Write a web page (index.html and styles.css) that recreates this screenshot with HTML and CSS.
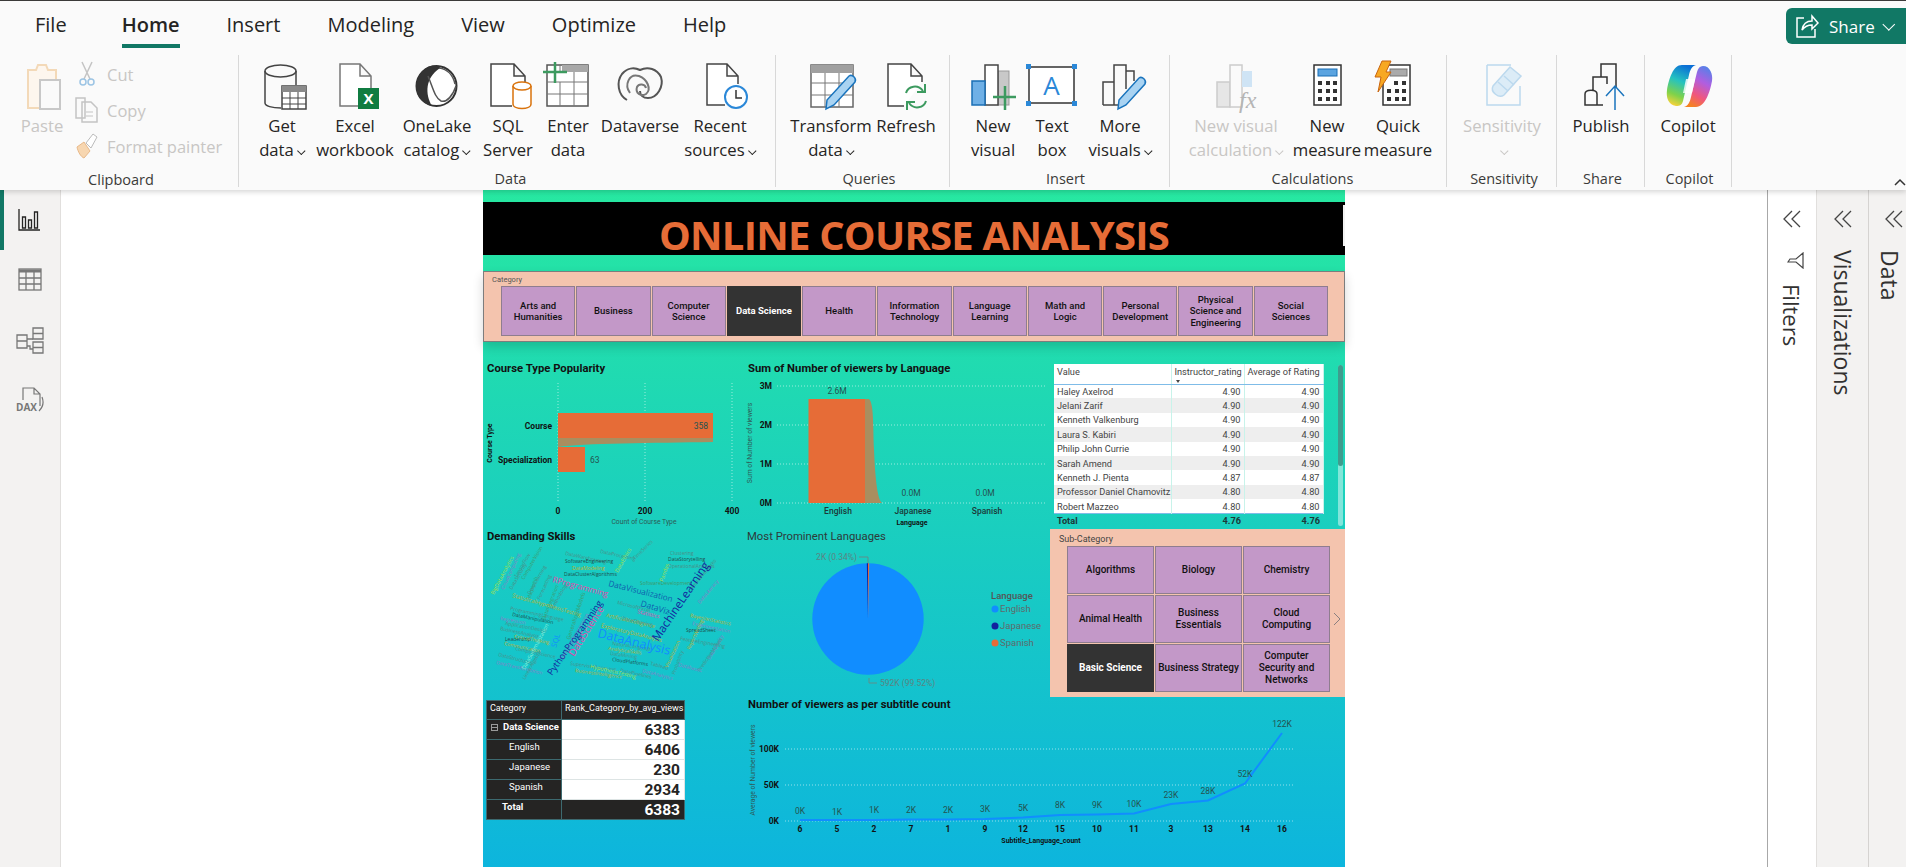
FILE: index.html
```html
<!DOCTYPE html>
<html lang="en">
<head>
    <meta charset="UTF-8">
    <title>Online Course Analysis - Power BI Desktop</title>
    <link rel="stylesheet" href="styles.css">
</head>
<body>

    <!-- ribbon -->
    <header class="ribbon">
        <nav class="tabs">
            <span class="tab tab-file">File</span>
            <span class="tab tab-active">Home</span>
            <span class="tab">Insert</span>
            <span class="tab">Modeling</span>
            <span class="tab">View</span>
            <span class="tab">Optimize</span>
            <span class="tab">Help</span>
            <button class="share">
                <svg width="24" height="26" viewBox="0 0 24 26"><path d="M9 5H2v19h18v-8M7 17c1-6 5-9 10-9V3l6 7-6 6v-4c-4 0-7 1-10 5z" fill="none" stroke="#fff" stroke-width="1.5"/></svg>
                Share
                <i class="caret caret-share"></i>
            </button>
        </nav>

        <div class="groups">
            <section class="group group-clipboard">
                <div class="group-body">
                    <div class="btn w76 disabled">
                        <svg class="icon" width="56" height="50" viewBox="0 0 56 50"><path d="M14 8h8l2-5h8l2 5h8v38H14z" fill="#fdf6ee" stroke="#f3d9b8" stroke-width="2"/><rect x="26" y="18" width="20" height="29" fill="#fafafa" stroke="#c8c8c8" stroke-width="2"/></svg>
                        <span class="label">Paste</span>
                    </div>
                    <div class="small-stack disabled">
                        <div class="small-btn">
                            <svg width="22" height="26" viewBox="0 0 22 26"><path d="M6 1l8 17M16 1L8 18" stroke="#c4c4c4" stroke-width="1.5"/><circle cx="7" cy="21" r="3" fill="none" stroke="#9cc4e4" stroke-width="1.5"/><circle cx="15" cy="21" r="3" fill="none" stroke="#9cc4e4" stroke-width="1.5"/></svg>
                            <span>Cut</span>
                        </div>
                        <div class="small-btn">
                            <svg width="24" height="26" viewBox="0 0 24 26"><path d="M1 1h9v20H1zM7 5h9l6 6v14H7z" fill="#fafafa" stroke="#c4c4c4" stroke-width="1.5"/><path d="M11 15h7M11 19h7" stroke="#c4c4c4"/></svg>
                            <span>Copy</span>
                        </div>
                        <div class="small-btn">
                            <svg width="24" height="26" viewBox="0 0 24 26"><path d="M2 14l7-5 6 9-6 7c-3-1-6-6-7-11z" fill="#f7d6b0" stroke="#e8b98a"/><path d="M11 10l7-9 4 3-6 11z" fill="#fff" stroke="#bbb"/></svg>
                            <span>Format painter</span>
                        </div>
                    </div>
                </div>
                <div class="group-name">Clipboard</div>
            </section>

            <section class="group group-data">
                <div class="group-body">
                    <div class="btn w72">
                        <svg class="icon" width="56" height="50" viewBox="0 0 56 50"><path d="M11 9v32c0 3 7 5 16 5M42 9v14" fill="none" stroke="#444" stroke-width="1.5"/><ellipse cx="26.500" cy="9" rx="15.500" ry="6" fill="none" stroke="#444" stroke-width="1.5"/><rect x="28" y="24" width="24" height="23" fill="#fff" stroke="#444" stroke-width="1.5"/><rect x="28" y="24" width="24" height="6" fill="#8a8a8a"/><path d="M28 36h24M28 42h24M36 30v17M44 30v17" stroke="#444"/></svg>
                        <span class="label">Get<br>data<i class="caret"></i></span>
                    </div>
                    <div class="btn w74">
                        <svg class="icon" width="56" height="50" viewBox="0 0 56 50"><path d="M31 44H13V2h20l11 12v12M33 2v12h11" fill="#fff" stroke="#777" stroke-width="1.500"/><rect x="31" y="26" width="21" height="21" fill="#107c41"/><text class="excel-x" x="41.500" y="42">X</text></svg>
                        <span class="label">Excel<br>workbook</span>
                    </div>
                    <div class="btn w90">
                        <svg class="icon" width="56" height="50" viewBox="0 0 56 50"><circle cx="27.500" cy="24" r="20" fill="#fff" stroke="#333" stroke-width="2"/><path d="M22 4C9 8 5 22 9 33c3 6 9 10 14 11-7-12-7-28 8-38 3-2-5-3-9-2z" fill="#333"/><path d="M19 14c5 12 7 22 13 25 6 2 12-6 15-15M30 6c8 1 14 7 16 16" fill="none" stroke="#555" stroke-width="1.500"/></svg>
                        <span class="label">OneLake<br>catalog<i class="caret"></i></span>
                    </div>
                    <div class="btn w52">
                        <svg class="icon" width="56" height="50" viewBox="0 0 56 50"><path d="M32 44H11V2h23l11 12v6M34 2v12h11" fill="#fff" stroke="#444" stroke-width="1.500"/><path d="M33 24v18c0 6 18 6 18 0V24" fill="#fff" stroke="#d9730d" stroke-width="1.500"/><ellipse cx="42" cy="24" rx="9" ry="4" fill="#fff" stroke="#d9730d" stroke-width="1.500"/></svg>
                        <span class="label">SQL<br>Server</span>
                    </div>
                    <div class="btn w68">
                        <svg class="icon" width="56" height="50" viewBox="0 0 56 50"><rect x="7" y="3" width="41" height="41" fill="#fff" stroke="#555" stroke-width="1.500"/><rect x="22" y="3" width="26" height="7" fill="#a8a8a8"/><path d="M7 20h41M7 32h41M20 20v24M34 10v34M20 3v7" stroke="#777"/><path d="M15 0v21M3 10h24" stroke="#3c9a5f" stroke-width="2.500"/></svg>
                        <span class="label">Enter<br>data</span>
                    </div>
                    <div class="btn w76">
                        <svg class="icon" width="56" height="50" viewBox="0 0 56 50"><path d="M15 38C6 33 4 20 10 12c5-6 12-7 18-4 8-4 17-1 21 7 3 10-4 21-13 21-5 0-8-3-8-7" fill="none" stroke="#555" stroke-width="2"/><path d="M18 31c-6-8-1-20 9-17 8 3 13 13 7 18-5 3-11-1-9-7 2-4 8-3 9 1" fill="none" stroke="#777" stroke-width="2"/></svg>
                        <span class="label">Dataverse</span>
                    </div>
                    <div class="btn w84">
                        <svg class="icon" width="56" height="50" viewBox="0 0 56 50"><path d="M33 43H15V2h20l11 12v8M35 2v12h11" fill="#fff" stroke="#444" stroke-width="1.500"/><circle cx="44" cy="35" r="11" fill="#fff" stroke="#2b88d8" stroke-width="2"/><path d="M44 28v8h6" fill="none" stroke="#333" stroke-width="1.500"/></svg>
                        <span class="label">Recent<br>sources<i class="caret"></i></span>
                    </div>
                </div>
                <div class="group-name">Data</div>
            </section>

            <section class="group group-queries">
                <div class="group-body">
                    <div class="btn w84">
                        <svg class="icon" width="56" height="50" viewBox="0 0 56 50"><rect x="8" y="3" width="42" height="42" fill="#fff" stroke="#666" stroke-width="1.500"/><rect x="8" y="3" width="42" height="8" fill="#a0a0a0"/><path d="M8 21h42M8 33h42M22 11v34M36 11v34" stroke="#777"/><path d="M23 47l1-9 22-24c3-2 8 2 6 6L31 43z" fill="#a9d3f2" stroke="#1a74bd" stroke-width="1.500"/></svg>
                        <span class="label">Transform<br>data<i class="caret"></i></span>
                    </div>
                    <div class="btn w66">
                        <svg class="icon" width="56" height="50" viewBox="0 0 56 50"><path d="M26 44H10V2h23l11 12v6M33 2v12h11" fill="#fff" stroke="#444" stroke-width="1.500"/><path d="M28 31c2-7 12-9 17-2M48 39c-2 7-12 9-17 2" fill="none" stroke="#3c9a5f" stroke-width="2"/><path d="M47 22v8h-8M29 48v-8h8" fill="none" stroke="#3c9a5f" stroke-width="2"/></svg>
                        <span class="label">Refresh</span>
                    </div>
                </div>
                <div class="group-name">Queries</div>
            </section>

            <section class="group group-insert">
                <div class="group-body">
                    <div class="btn w62">
                        <svg class="icon" width="56" height="50" viewBox="0 0 56 50"><rect x="33" y="9" width="11" height="34" fill="#c8c8c8" stroke="#999"/><rect x="20" y="3" width="13" height="40" fill="#fff" stroke="#444" stroke-width="1.500"/><rect x="7" y="19" width="13" height="24" fill="#6fb0e6" stroke="#1a6fb5" stroke-width="1.500"/><path d="M40 24v24M28 35h23" stroke="#3c9a5f" stroke-width="2.500"/></svg>
                        <span class="label">New<br>visual</span>
                    </div>
                    <div class="btn w56">
                        <svg class="icon" width="56" height="50" viewBox="0 0 56 50"><rect x="5" y="5" width="45" height="36" fill="#fff" stroke="#333" stroke-width="1.500"/><path d="M2 2h5v5H2zM48 2h5v5h-5zM2 39h5v5H2zM48 39h5v5h-5z" fill="#2b88d8"/><text class="icon-a" x="27.500" y="33">A</text></svg>
                        <span class="label">Text<br>box</span>
                    </div>
                    <div class="btn w80">
                        <svg class="icon" width="56" height="50" viewBox="0 0 56 50"><path d="M11 43V20h11M22 43V3h12v24M34 9h8v10" fill="none" stroke="#444" stroke-width="1.500"/><path d="M11 43h17" stroke="#444" stroke-width="1.500"/><path d="M26 47l1-9 20-22c3-2 8 2 6 6L34 43z" fill="#a9d3f2" stroke="#1a74bd" stroke-width="1.500"/></svg>
                        <span class="label">More<br>visuals<i class="caret"></i></span>
                    </div>
                </div>
                <div class="group-name">Insert</div>
            </section>

            <section class="group group-calc">
                <div class="group-body">
                    <div class="btn w114 disabled">
                        <svg class="icon" width="56" height="50" viewBox="0 0 56 50"><rect x="9" y="20" width="13" height="25" fill="#e6e6e6" stroke="#ccc" stroke-width="1.500"/><rect x="22" y="3" width="12" height="42" fill="#fafafa" stroke="#ccc" stroke-width="1.500"/><rect x="34" y="9" width="10" height="16" fill="#cfe4f5"/><text class="icon-fx" x="31" y="46">fx</text></svg>
                        <span class="label">New visual<br>calculation<i class="caret"></i></span>
                    </div>
                    <div class="btn w68">
                        <svg class="icon" width="56" height="50" viewBox="0 0 56 50"><rect x="15" y="3" width="27" height="40" fill="#fff" stroke="#333" stroke-width="1.500"/><rect x="19" y="7" width="19" height="7" fill="#5ba4e0" stroke="#1a6fb5"/><path d="M19 19h4v4h-4zM27 19h4v4h-4zM34 19h4v4h-4zM19 27h4v4h-4zM27 27h4v4h-4zM34 27h4v4h-4zM19 35h4v4h-4zM27 35h4v4h-4zM34 35h4v4h-4z" fill="#333"/></svg>
                        <span class="label">New<br>measure</span>
                    </div>
                    <div class="btn w74">
                        <svg class="icon" width="56" height="50" viewBox="0 0 56 50"><rect x="13" y="3" width="27" height="40" fill="#fff" stroke="#333" stroke-width="1.500"/><rect x="20" y="7" width="17" height="7" fill="#aaa" stroke="#777"/><path d="M24 19h4v4h-4zM32 19h4v4h-4zM17 27h4v4h-4zM25 27h4v4h-4zM32 27h4v4h-4zM17 35h4v4h-4zM25 35h4v4h-4zM32 35h4v4h-4z" fill="#333"/><path d="M12-1h9l-5 11h5L8 30l3-15H5z" fill="#f7a823" stroke="#c8640f"/></svg>
                        <span class="label">Quick<br>measure</span>
                    </div>
                </div>
                <div class="group-name">Calculations</div>
            </section>

            <section class="group group-sens">
                <div class="group-body">
                    <div class="btn w100 disabled">
                        <svg class="icon" width="56" height="50" viewBox="0 0 56 50"><path d="M13 3h24M13 3v40h33V24" fill="none" stroke="#bcd9ee" stroke-width="1.500"/><path d="M19 24L36 5l11 9-17 19c-5 4-14-3-11-9z" fill="#dcecf7" stroke="#bcd9ee" stroke-width="1.500"/><path d="M24 20l10 9M30 14l10 9" stroke="#bcd9ee" stroke-width="1.500"/></svg>
                        <span class="label">Sensitivity<br><i class="caret"></i></span>
                    </div>
                </div>
                <div class="group-name">Sensitivity</div>
            </section>

            <section class="group group-share">
                <div class="group-body">
                    <div class="btn w80">
                        <svg class="icon" width="56" height="50" viewBox="0 0 56 50"><path d="M28 15V2h15v24M20 28V15h14v7M30 43H12V32c0-5 12-5 12 0v11" fill="none" stroke="#333" stroke-width="1.500"/><path d="M42 48V24M33 34l9-10 9 10" fill="none" stroke="#1a74bd" stroke-width="1.500"/></svg>
                        <span class="label">Publish</span>
                    </div>
                </div>
                <div class="group-name">Share</div>
            </section>

            <section class="group group-copilot">
                <div class="group-body">
                    <div class="btn w80">
                        <svg class="icon" width="56" height="50" viewBox="0 0 56 50">
                            <defs>
                                <linearGradient id="copilotA" x1="0.600" y1="0" x2="0.300" y2="1"><stop offset="0" stop-color="#0b6fd6"/><stop offset="0.400" stop-color="#25c3c0"/><stop offset="0.750" stop-color="#7fd24a"/><stop offset="1" stop-color="#f4d23b"/></linearGradient>
                                <linearGradient id="copilotB" x1="0.700" y1="0" x2="0.300" y2="1"><stop offset="0" stop-color="#5a7fe8"/><stop offset="0.350" stop-color="#b05ee0"/><stop offset="0.700" stop-color="#f0567e"/><stop offset="1" stop-color="#f58220"/></linearGradient>
                            </defs>
                            <path d="M22 3h14c-4 1-6 5-7 10l-6 26c-1 4-3 5-7 5C8 43 6 35 7 28 9 17 13 3 22 3z" fill="url(#copilotA)"/>
                            <path d="M36 45H24c4-1 6-5 7-10l6-25c1-4 3-6 6-6 7 0 10 8 9 15-2 11-7 26-16 26z" fill="url(#copilotB)"/>
                            <path d="M26 17h9l-3 14h-9z" fill="#fff" opacity="0.800"/>
                        </svg>
                        <span class="label">Copilot</span>
                    </div>
                </div>
                <div class="group-name">Copilot</div>
            </section>
        </div>
        <svg class="ribbon-collapse" width="12" height="8" viewBox="0 0 12 8"><path d="M1 7l5-5 5 5" fill="none" stroke="#333" stroke-width="1.500"/></svg>
    </header>

    <div class="workspace">
        <!-- view switcher -->
        <aside class="rail">
            <div class="rail-item rail-active">
                <svg width="24" height="24" viewBox="0 0 24 24"><path d="M1 1v21h21" fill="none" stroke="#252423" stroke-width="1.300"/><path d="M4.500 9h3v11h-3zM10.500 12h3v8h-3zM16.500 4h3v16h-3z" fill="none" stroke="#252423" stroke-width="1.300"/></svg>
            </div>
            <div class="rail-item">
                <svg width="24" height="24" viewBox="0 0 24 24"><rect x="1" y="1" width="22" height="21" fill="none" stroke="#777" stroke-width="1.300"/><path d="M1 3h22" stroke="#777" stroke-width="3"/><path d="M1 10h22M1 16h22M8 3v19M16 3v19" stroke="#777" stroke-width="1.300"/></svg>
            </div>
            <div class="rail-item">
                <svg width="28" height="28" viewBox="0 0 28 28"><path d="M17 2h10v11H17zM17 16h10v11H17zM1 9h10v13H1z" fill="none" stroke="#777" stroke-width="1.300"/><path d="M17 7.500h10M17 21.500h10M1 15h10M11 13h6M11 20h3v3h3" fill="none" stroke="#777" stroke-width="1.300"/></svg>
            </div>
            <div class="rail-item rail-dax">
                <svg width="28" height="26" viewBox="0 0 28 26"><path d="M7 13V1h11l6 6v12M18 1v6h6M26 10c2 5 1 10-3 14" fill="none" stroke="#777" stroke-width="1.200"/><text class="dax" x="0" y="24">DAX</text></svg>
            </div>
        </aside>

        <main class="canvas">
            <div class="report">
                <div class="report-title">ONLINE COURSE ANALYSIS</div>

                <div class="slicer-top">
                    <div class="slicer-caption">Category</div>
                    <div class="chips chips-top">
                        <div class="chip">Arts and Humanities</div>
                        <div class="chip">Business</div>
                        <div class="chip">Computer Science</div>
                        <div class="chip chip-on">Data Science</div>
                        <div class="chip">Health</div>
                        <div class="chip">Information Technology</div>
                        <div class="chip">Language Learning</div>
                        <div class="chip">Math and Logic</div>
                        <div class="chip">Personal Development</div>
                        <div class="chip">Physical Science and Engineering</div>
                        <div class="chip">Social Sciences</div>
                    </div>
                </div>

                <div class="viz-grid">
                    <!-- course type bar -->
                    <svg class="chart" width="261" height="187" viewBox="483 342 261 187">
                        <text class="viz-title" x="487" y="372">Course Type Popularity</text>
                        <path class="grid-line" d="M558 383v120M645 383v120M732 383v120"/>
                        <rect class="bar" x="558" y="413" width="155" height="25"/>
                        <path class="bar-shade" d="M558 438h155v4c-60 1-130 1-155 5z"/>
                        <rect class="bar" x="558" y="447" width="27" height="25"/>
                        <text class="tick end" x="552" y="429">Course</text>
                        <text class="tick end" x="552" y="463">Specialization</text>
                        <text class="data-label end" x="708" y="429">358</text>
                        <text class="data-label" x="590" y="463">63</text>
                        <text class="tick mid" x="558" y="514">0</text>
                        <text class="tick mid" x="645" y="514">200</text>
                        <text class="tick mid" x="732" y="514">400</text>
                        <text class="axis-name mid" x="644" y="524">Count of Course Type</text>
                        <text class="axis-name-bold mid" transform="translate(492 443) rotate(-90)">Course Type</text>
                    </svg>

                    <!-- viewers by language -->
                    <svg class="chart" width="306" height="187" viewBox="744 342 306 187">
                        <text class="viz-title" x="748" y="372">Sum of Number of viewers by Language</text>
                        <path class="grid-line" d="M777 386h270M777 425h270M777 464h270M777 503h270"/>
                        <text class="tick end" x="772" y="389">3M</text>
                        <text class="tick end" x="772" y="428">2M</text>
                        <text class="tick end" x="772" y="467">1M</text>
                        <text class="tick end" x="772" y="506">0M</text>
                        <path class="bar-shade" d="M865 399h4c5 4 4 30 5 50 1 25 3 50 8 54h-17z"/>
                        <rect class="bar" x="808.500" y="399" width="56.500" height="104"/>
                        <text class="data-label mid" x="837" y="394">2.6M</text>
                        <text class="data-label mid" x="911" y="496">0.0M</text>
                        <text class="data-label mid" x="985" y="496">0.0M</text>
                        <text class="tick-light mid" x="838" y="514">English</text>
                        <text class="tick-light mid" x="913" y="514">Japanese</text>
                        <text class="tick-light mid" x="987" y="514">Spanish</text>
                        <text class="axis-name-bold mid" x="912" y="525">Language</text>
                        <text class="axis-name mid" transform="translate(752 443) rotate(-90)">Sum of Number of viewers</text>
                    </svg>

                    <!-- instructor table -->
                    <div class="table-cell">
                        <table class="rating-table">
                            <colgroup><col class="col-name"><col class="col-rate"><col class="col-avg"></colgroup>
                            <thead>
                                <tr><th>Value</th><th class="sorted">Instructor_rating</th><th>Average of Rating</th></tr>
                            </thead>
                            <tbody>
                                <tr><td>Haley Axelrod</td><td>4.90</td><td>4.90</td></tr>
                                <tr><td>Jelani Zarif</td><td>4.90</td><td>4.90</td></tr>
                                <tr><td>Kenneth Valkenburg</td><td>4.90</td><td>4.90</td></tr>
                                <tr><td>Laura S. Kabiri</td><td>4.90</td><td>4.90</td></tr>
                                <tr><td>Philip John Currie</td><td>4.90</td><td>4.90</td></tr>
                                <tr><td>Sarah Amend</td><td>4.90</td><td>4.90</td></tr>
                                <tr><td>Kenneth J. Pienta</td><td>4.87</td><td>4.87</td></tr>
                                <tr><td>Professor Daniel Chamovitz</td><td>4.80</td><td>4.80</td></tr>
                                <tr><td>Robert Mazzeo</td><td>4.80</td><td>4.80</td></tr>
                            </tbody>
                            <tfoot>
                                <tr><td>Total</td><td>4.76</td><td>4.76</td></tr>
                            </tfoot>
                        </table>
                        <div class="scrollbar"><div class="scroll-thumb"></div></div>
                    </div>

                    <!-- word cloud -->
                    <svg class="chart" width="261" height="168" viewBox="483 529 261 168">
                        <text class="viz-title" x="487" y="540">Demanding Skills</text>
                        <g class="wc">
                            <text class="wc-dim wc-xxs" transform="translate(510 610) rotate(12)">ProgrammingLanguage</text>
                            <text class="wc-dark wc-xxs" transform="translate(512 616) rotate(11)">DataManipulation</text>
                            <text class="wc-dim wc-xxs" transform="translate(500 630) rotate(12)">BusinessAnalysis</text>
                            <text class="wc-dark wc-xxs" transform="translate(505 641)">Leadership</text>
                            <text class="wc-dim wc-xxs" transform="translate(515 650) rotate(12)">ComputerScience</text>
                            <text class="wc-gold wc-xxs" transform="translate(514 638) rotate(10)">CriticalThinking</text>
                            <text class="wc-dim wc-xxs" transform="translate(498 656) rotate(14)">DataStructures</text>
                            <text class="wc-purple wc-xxs" transform="translate(500 620) rotate(10)">Regression</text>
                            <text class="wc-purple wc-xxs" transform="translate(496 664) rotate(13)">DataTransformation</text>
                            <text class="wc-dim wc-xxs" transform="translate(505 625) rotate(10)">ApplicationDesign</text>
                            <text class="wc-gold wc-xxs" transform="translate(504 645) rotate(12)">Communication</text>
                            <text class="wc-green wc-xxs" transform="translate(530 600) rotate(-70)">Matplotlib</text>
                            <text class="wc-dim wc-xxs" transform="translate(540 600) rotate(-65)">Forecasting</text>
                            <text class="wc-green wc-xxs" transform="translate(545 620) rotate(-68)">DataIntegration</text>
                            <text class="wc-dim wc-xxs" transform="translate(553 610) rotate(-60)">Methodology</text>
                            <text class="wc-lime wc-xs" transform="translate(494 595) rotate(-62)">BigDataAnalytics</text>
                            <text class="wc-dim wc-xxs" transform="translate(517 578) rotate(-60)">TensorFlow</text>
                            <text class="wc-dim wc-xxs" transform="translate(530 595) rotate(-60)">DeepLearning</text>
                            <text class="wc-purple wc-xxs" transform="translate(504 590) rotate(-65)">CloudComputing</text>
                            <text class="wc-dim wc-xxs" transform="translate(512 590) rotate(-60)">DataSecurity</text>
                            <text class="wc-green wc-xxs" transform="translate(524 580) rotate(-60)">ComputerVision</text>
                            <text class="wc-dim wc-xxs" transform="translate(565 555) rotate(12)">DataWarehousing</text>
                            <text class="wc-dark wc-xxs" transform="translate(564 576)">DataClusterAlgorithms</text>
                            <text class="wc-gold wc-xxs" transform="translate(572 570)">DataModeling</text>
                            <text class="wc-dim wc-xxs" transform="translate(600 553) rotate(12)">DataProcessing</text>
                            <text class="wc-dark wc-xxs" transform="translate(565 563)">SoftwareEngineering</text>
                            <text class="wc-lime wc-xs" transform="translate(618 573) rotate(-60)">DataEthics</text>
                            <text class="wc-dim wc-xxs" transform="translate(635 560) rotate(-45)">TimeSeries</text>
                            <text class="wc-dim wc-xxs" transform="translate(670 555)">Clustering</text>
                            <text class="wc-dark wc-xxs" transform="translate(668 561)">DataStorytelling</text>
                            <text class="wc-dim wc-xxs" transform="translate(668 568)">OperationalAnalysis</text>
                            <text class="wc-green wc-xxs" transform="translate(640 585)">SoftwareDevelopment</text>
                            <text class="wc-lime wc-xs" transform="translate(663 582) rotate(-70)">Pandas</text>
                            <text class="wc-dim wc-xxs" transform="translate(692 590) rotate(-50)">NeuralNetworks</text>
                            <text class="wc-purple wc-xxs" transform="translate(700 604) rotate(-50)">DataLiteracy</text>
                            <text class="wc-gold wc-xxs" transform="translate(690 617) rotate(12)">BayesianStatistics</text>
                            <text class="wc-dark wc-xxs" transform="translate(686 632)">SpreadSheet</text>
                            <text class="wc-dim wc-xxs" transform="translate(680 640) rotate(10)">FeatureEngineering</text>
                            <text class="wc-purple wc-xxs" transform="translate(692 625) rotate(12)">Experimentation</text>
                            <text class="wc-gold wc-xxs" transform="translate(690 650) rotate(-65)">ReportWriting</text>
                            <text class="wc-purple wc-xxs" transform="translate(710 660) rotate(-60)">DataQuality</text>
                            <text class="wc-dim wc-xxs" transform="translate(675 675) rotate(-70)">Probability</text>
                            <text class="wc-gold wc-xxs" transform="translate(668 668) rotate(-65)">Visualization</text>
                            <text class="wc-dim wc-xxs" transform="translate(700 672) rotate(-55)">PredictiveModels</text>
                            <text class="wc-purple wc-xxs" transform="translate(678 666) rotate(15)">Databases</text>
                            <text class="wc-dim wc-xxs" transform="translate(612 645) rotate(8)">NaturalLanguage</text>
                            <text class="wc-dim wc-xxs" transform="translate(610 655) rotate(8)">DataMining</text>
                            <text class="wc-dark wc-xxs" transform="translate(612 661) rotate(8)">CloudPlatforms</text>
                            <text class="wc-gold wc-xxs" transform="translate(608 650) rotate(8)">AnalyticalSkills</text>
                            <text class="wc-dim wc-xxs" transform="translate(570 665) rotate(8)">SupervisedLearning</text>
                            <text class="wc-gold wc-xxs" transform="translate(575 672) rotate(8)">BusinessIntelligence</text>
                            <text class="wc-dim wc-xxs" transform="translate(620 672) rotate(12)">DataPipelines</text>
                            <text class="wc-lime wc-xs" transform="translate(590 668) rotate(13)">HypothesisTesting</text>
                            <text class="wc-aqua wc-xs" transform="translate(525 670) rotate(-62)">DataSummarization</text>
                            <text class="wc-dim wc-xxs" transform="translate(525 680) rotate(-60)">LinearAlgebra</text>
                            <text class="wc-dim wc-xxs" transform="translate(650 665) rotate(15)">Tableau</text>
                            <text class="wc-purple wc-xxs" transform="translate(642 672) rotate(15)">DataAnalytics</text>
                            <text class="wc-gold wc-xs" transform="translate(606 617) rotate(13)">ArtificialIntelligence</text>
                            <text class="wc-gold wc-xs" transform="translate(601 627) rotate(14)">ExploratoryDataAnalysis</text>
                            <text class="wc-gold wc-xs" transform="translate(512 597) rotate(16)">StatisticalHypothesisTesting</text>
                            <text class="wc-purple wc-xs" transform="translate(563 660) rotate(-60)">SmokingProgression</text>
                            <text class="wc-green wc-xs" transform="translate(570 640) rotate(-72)">GeneralizedModels</text>
                            <text class="wc-dim wc-xxs" transform="translate(617 604) rotate(14)">MicrosoftExcel</text>
                            <text class="wc-dim wc-xxs" transform="translate(622 620) rotate(12)">DataCleaning</text>
                            <text class="wc-pink wc-xs" transform="translate(637 613) rotate(14)">Statistics</text>
                            <text class="wc-blue wc-sql" transform="translate(556 648) rotate(-72)">SQL</text>
                            <text class="wc-pink wc-rp" transform="translate(552 582) rotate(15)">RProgramming</text>
                            <text class="wc-deep wc-dv" transform="translate(608 586) rotate(14)">DataVisualization</text>
                            <text class="wc-deep wc-dz" transform="translate(640 606) rotate(17)">DataViz</text>
                            <text class="wc-pink wc-ds" transform="translate(574 657) rotate(-58)">DataScience</text>
                            <text class="wc-navy wc-py" transform="translate(552 676) rotate(-55)">PythonProgramming</text>
                            <text class="wc-navy wc-ml" transform="translate(658 642) rotate(-56)">MachineLearning</text>
                            <text class="wc-blue wc-da" transform="translate(597 637) rotate(14)">DataAnalysis</text>
                        </g>
                    </svg>

                    <!-- languages pie -->
                    <svg class="chart" width="306" height="168" viewBox="744 529 306 168">
                        <text class="viz-title viz-title-thin" x="747" y="540">Most Prominent Languages</text>
                        <circle cx="868" cy="619" r="55.700" fill="#118dff"/>
                        <path d="M868 619l-1.200-55.700h1.200z" fill="#12239e"/>
                        <path d="M868 619v-55.700h1.200z" fill="#e66c37"/>
                        <path class="leader" d="M859 557h9v6M869 678v5h8"/>
                        <text class="pie-label end" x="857" y="560">2K (0.34%)</text>
                        <text class="pie-label" x="880" y="686">592K (99.52%)</text>
                        <text class="legend-title" x="991" y="599">Language</text>
                        <circle cx="995" cy="609" r="3.500" fill="#118dff"/>
                        <circle cx="995" cy="626" r="3.500" fill="#12239e"/>
                        <circle cx="995" cy="643" r="3.500" fill="#e66c37"/>
                        <text class="legend-item" x="1000" y="612">English</text>
                        <text class="legend-item" x="1000" y="629">Japanese</text>
                        <text class="legend-item" x="1000" y="646">Spanish</text>
                    </svg>

                    <!-- sub category -->
                    <div class="slicer-sub">
                        <div class="slicer-caption-sub">Sub-Category</div>
                        <div class="sub-body">
                            <div class="chips chips-sub">
                                <div class="chip">Algorithms</div>
                                <div class="chip">Biology</div>
                                <div class="chip">Chemistry</div>
                                <div class="chip">Animal Health</div>
                                <div class="chip">Business<br>Essentials</div>
                                <div class="chip">Cloud<br>Computing</div>
                                <div class="chip chip-on">Basic Science</div>
                                <div class="chip">Business Strategy</div>
                                <div class="chip">Computer<br>Security and<br>Networks</div>
                            </div>
                            <svg class="sub-next" width="8" height="14" viewBox="0 0 8 14"><path d="M1 1l6 6-6 6" fill="none" stroke="#8a7f80"/></svg>
                        </div>
                    </div>

                    <!-- matrix -->
                    <div class="matrix-cell">
                        <table class="matrix">
                            <colgroup><col class="col-cat"><col class="col-rank"></colgroup>
                            <thead>
                                <tr><th>Category</th><th>Rank_Category_by_avg_views</th></tr>
                            </thead>
                            <tbody>
                                <tr><th class="lvl0"><i class="collapse-box"></i>Data Science</th><td>6383</td></tr>
                                <tr><th class="lvl1">English</th><td>6406</td></tr>
                                <tr><th class="lvl1">Japanese</th><td>230</td></tr>
                                <tr><th class="lvl1">Spanish</th><td>2934</td></tr>
                            </tbody>
                            <tfoot>
                                <tr><th class="lvl0 total-name">Total</th><td>6383</td></tr>
                            </tfoot>
                        </table>
                    </div>

                    <!-- viewers per subtitle count -->
                    <svg class="chart chart-wide" width="601" height="170" viewBox="744 697 601 170">
                        <text class="viz-title" x="748" y="708">Number of viewers as per subtitle count</text>
                        <path class="grid-line" d="M785 749h510M785 785h510M785 821h510"/>
                        <text class="tick end" x="779" y="752">100K</text>
                        <text class="tick end" x="779" y="788">50K</text>
                        <text class="tick end" x="779" y="824">0K</text>
                        <polyline class="trend" points="800,820 837,820 874,820 911,819.500 948,819.500 985,819 1023,817.500 1060,815 1097,814.500 1134,813.500 1171,804 1208,800.500 1245,783.500 1282,733"/>
                        <g class="data-label mid">
                            <text x="800" y="814">0K</text>
                            <text x="837" y="815">1K</text>
                            <text x="874" y="813">1K</text>
                            <text x="911" y="813">2K</text>
                            <text x="948" y="813">2K</text>
                            <text x="985" y="812">3K</text>
                            <text x="1023" y="811">5K</text>
                            <text x="1060" y="808">8K</text>
                            <text x="1097" y="808">9K</text>
                            <text x="1134" y="807">10K</text>
                            <text x="1171" y="798">23K</text>
                            <text x="1208" y="794">28K</text>
                            <text x="1245" y="777">52K</text>
                            <text x="1282" y="727">122K</text>
                        </g>
                        <g class="tick mid">
                            <text x="800" y="832">6</text>
                            <text x="837" y="832">5</text>
                            <text x="874" y="832">2</text>
                            <text x="911" y="832">7</text>
                            <text x="948" y="832">1</text>
                            <text x="985" y="832">9</text>
                            <text x="1023" y="832">12</text>
                            <text x="1060" y="832">15</text>
                            <text x="1097" y="832">10</text>
                            <text x="1134" y="832">11</text>
                            <text x="1171" y="832">3</text>
                            <text x="1208" y="832">13</text>
                            <text x="1245" y="832">14</text>
                            <text x="1282" y="832">16</text>
                        </g>
                        <text class="axis-name-bold mid" x="1041" y="843">Subtitle_Language_count</text>
                        <text class="axis-name mid" transform="translate(755 770) rotate(-90)">Average of Number of viewers</text>
                    </svg>
                </div>
            </div>
        </main>

        <!-- collapsed panes -->
        <aside class="pane pane-filters">
            <svg class="pane-chevron" width="18" height="18" viewBox="0 0 18 18"><path d="M9 1L1 9l8 8M17 1L9 9l8 8" fill="none" stroke="#444" stroke-width="1.300"/></svg>
            <svg class="pane-funnel" width="17" height="17" viewBox="0 0 17 17"><path d="M1 1h15l-6 7v8l-3-2V8z" fill="none" stroke="#444" stroke-width="1.200"/></svg>
            <span class="pane-text">Filters</span>
        </aside>
        <aside class="pane pane-viz">
            <svg class="pane-chevron" width="18" height="18" viewBox="0 0 18 18"><path d="M9 1L1 9l8 8M17 1L9 9l8 8" fill="none" stroke="#444" stroke-width="1.300"/></svg>
            <span class="pane-text">Visualizations</span>
        </aside>
        <aside class="pane pane-data">
            <svg class="pane-chevron" width="18" height="18" viewBox="0 0 18 18"><path d="M9 1L1 9l8 8M17 1L9 9l8 8" fill="none" stroke="#444" stroke-width="1.300"/></svg>
            <span class="pane-text">Data</span>
        </aside>
    </div>

</body>
</html>
```

FILE: styles.css
```css
* {
    box-sizing: border-box;
}

html, body {
    height: 100%;
}

body {
    margin: 0;
    overflow: hidden;
    display: flex;
    flex-direction: column;
    font-family: "Open Sans", "Noto Sans", sans-serif;
    color: #252423;
    background-color: #fff;
}

/* ribbon */
.ribbon {
    position: relative;
    z-index: 2;
    flex: 0 0 190px;
    background-color: #fafafa;
    border-top: 1px solid #3b3a39;
    box-shadow: 0 2px 5px rgba(0, 0, 0, 0.16);
}

.tabs {
    display: flex;
    align-items: center;
    gap: 47px;
    height: 47px;
    padding-left: 35px;
    font-size: 20px;
}

.tab {
    position: relative;
    line-height: 47px;
}

.tab-file {
    margin-right: 8px;
}

.tab-active {
    font-weight: 600;
}

.tab-active::after {
    content: '';
    position: absolute;
    left: 0;
    right: 0;
    bottom: 0;
    height: 4px;
    background-color: #117865;
}

.share {
    position: absolute;
    top: 7px;
    right: 0;
    display: flex;
    align-items: center;
    gap: 10px;
    width: 120px;
    height: 36px;
    padding: 0 0 0 9px;
    border: none;
    border-radius: 6px 0 0 6px;
    background-color: #117865;
    color: #fff;
    font-family: inherit;
    font-size: 17px;
}

.groups {
    display: flex;
    height: 132px;
    margin-top: 7px;
}

.group {
    display: flex;
    flex-direction: column;
    border-right: 1px solid #d8d8d8;
}

.group-clipboard { width: 239px; padding-left: 4px; }
.group-data { width: 537px; padding-left: 7px; }
.group-queries { width: 174px; padding-left: 13px; }
.group-insert { width: 220px; padding-left: 12px; }
.group-calc { width: 277px; padding-left: 9px; }
.group-sens { width: 110px; padding-left: 5px; }
.group-share { width: 88px; padding-left: 4px; }
.group-copilot { width: 87px; padding-left: 3px; }

.group-body {
    display: flex;
    flex: 1;
}

.group-name {
    height: 24px;
    text-align: center;
    font-size: 14.500px;
    line-height: 32px;
    color: #3b3a39;
}

.btn {
    display: flex;
    flex-direction: column;
    align-items: center;
    flex-shrink: 0;
    padding-top: 7px;
}

.w52 { width: 52px; }
.w56 { width: 56px; }
.w62 { width: 62px; }
.w66 { width: 66px; }
.w68 { width: 68px; }
.w72 { width: 72px; }
.w74 { width: 74px; }
.w76 { width: 76px; }
.w80 { width: 80px; }
.w84 { width: 84px; }
.w90 { width: 90px; }
.w100 { width: 100px; }
.w114 { width: 114px; }

.icon {
    display: block;
    flex-shrink: 0;
    overflow: visible;
}

.label {
    margin-top: 2px;
    text-align: center;
    font-size: 16.700px;
    line-height: 24px;
    white-space: nowrap;
}

.caret {
    display: inline-block;
    width: 6px;
    height: 6px;
    margin-left: 5px;
    border-right: 1.3px solid currentColor;
    border-bottom: 1.3px solid currentColor;
    transform: rotate(45deg) translate(-2px, -1px);
}

.caret-share {
    width: 9px;
    height: 9px;
    margin-left: 0;
}

.disabled {
    color: #c8c6c4;
}

.small-stack {
    display: flex;
    flex-direction: column;
    margin-left: -5px;
    padding-top: 1px;
}

.small-btn {
    display: flex;
    align-items: center;
    gap: 8px;
    height: 36px;
    font-size: 16.500px;
    white-space: nowrap;
}

.small-btn svg {
    width: 24px;
}

.excel-x {
    fill: #fff;
    font-family: "Open Sans", sans-serif;
    font-size: 15px;
    font-weight: 700;
    text-anchor: middle;
}

.icon-a {
    fill: #2b88d8;
    font-family: "Open Sans", sans-serif;
    font-size: 26px;
    text-anchor: middle;
}

.icon-fx {
    fill: #b5b5b5;
    font-family: "Liberation Serif", serif;
    font-size: 24px;
    font-style: italic;
}

.ribbon-collapse {
    position: absolute;
    right: 0;
    bottom: 4px;
}

/* main area */
.workspace {
    display: flex;
    flex: 1;
    min-height: 0;
}

.rail {
    flex: 0 0 61px;
    display: flex;
    flex-direction: column;
    align-items: center;
    background-color: #f3f2f1;
    border-right: 1px solid #e1dfdd;
}

.rail-item {
    display: flex;
    align-items: center;
    justify-content: center;
    width: 100%;
    height: 60px;
}

.rail-active {
    border-left: 4px solid #117865;
    padding-right: 4px;
}

.dax {
    fill: #777;
    font-family: "Open Sans", sans-serif;
    font-size: 10px;
    font-weight: 700;
}

.canvas {
    flex: 1;
    display: flex;
    justify-content: center;
    background-color: #fff;
    overflow: hidden;
}

.report {
    width: 862px;
    height: 677px;
    padding-top: 12px;
    background: linear-gradient(180deg, #27e8a1 0%, #0db5dd 100%);
    font-family: Roboto, "Liberation Sans", sans-serif;
}

.report-title {
    position: relative;
    height: 53px;
    padding-top: 10px;
    background-color: #000;
    color: #e66c37;
    text-align: center;
    font-family: "Open Sans", sans-serif;
    font-size: 40px;
    font-weight: 700;
    line-height: 46px;
    letter-spacing: -0.770px;
}

.report-title::after {
    content: '';
    position: absolute;
    top: 3px;
    right: 0;
    width: 2px;
    height: 41px;
    background-color: #f2f2f2;
}

/* slicers */
.slicer-top {
    height: 71px;
    margin-top: 16px;
    padding: 4px 16px 0 17px;
    background-color: #f4c4ae;
    border: 1px solid #7d7d7d;
    box-shadow: 0 5px 10px rgba(0, 0, 0, 0.16);
}

.slicer-caption {
    height: 10px;
    margin-left: -9px;
    color: #555;
    font-size: 7.500px;
    line-height: 8px;
}

.chips {
    display: grid;
    gap: 1px;
}

.chips-top {
    grid-template-columns: repeat(11, 1fr);
    grid-template-rows: 50px;
}

.chip {
    display: flex;
    align-items: center;
    justify-content: center;
    padding: 0 8px;
    background-color: #c398c8;
    border: 1.500px solid #8f7d8f;
    color: #111;
    text-align: center;
    font-size: 9.500px;
    font-weight: 500;
    line-height: 11.500px;
}

.chip-on {
    background-color: #333;
    border-color: #333;
    color: #fff;
    font-weight: 700;
}

.slicer-sub {
    background-color: #f4c4ae;
    padding: 5px 0 0 17px;
}

.slicer-caption-sub {
    height: 12px;
    margin-left: -8px;
    color: #444;
    font-size: 9px;
    line-height: 10px;
}

.sub-body {
    display: flex;
    align-items: center;
    gap: 3px;
}

.chips-sub {
    grid-template-columns: repeat(3, 87px);
    grid-template-rows: repeat(3, 48px);
    gap: 1px;
}

.chips-sub .chip {
    padding: 0;
    font-size: 10px;
    line-height: 12px;
}

/* report grid */
.viz-grid {
    display: grid;
    grid-template-columns: 261px 306px 295px;
    grid-template-rows: 187px 168px 170px;
}

.chart {
    display: block;
    overflow: hidden;
}

.chart-wide {
    grid-column: 2 / 4;
}

.viz-title {
    fill: #111;
    font-size: 11.300px;
    font-weight: 700;
}

.viz-title-thin {
    fill: #2d3a3a;
    font-weight: 400;
}

.grid-line {
    fill: none;
    stroke: rgba(255, 255, 255, 0.55);
    stroke-dasharray: 1 2;
}

.bar {
    fill: #e66c37;
}

.bar-shade {
    fill: #a98e5f;
}

.tick {
    fill: #111;
    font-size: 8.500px;
    font-weight: 700;
}

.tick-light {
    fill: #1c3838;
    font-size: 8.500px;
    font-weight: 500;
}

.data-label {
    fill: #245350;
    font-size: 8.500px;
}

.axis-name {
    fill: #2e5a56;
    font-size: 6.800px;
}

.axis-name-bold {
    fill: #111;
    font-size: 7px;
    font-weight: 700;
}

.end {
    text-anchor: end;
}

.mid {
    text-anchor: middle;
}

.leader {
    fill: none;
    stroke: #5f8f8c;
}

.pie-label {
    fill: #5a8583;
    font-size: 8.500px;
}

.legend-title {
    fill: #555;
    font-size: 9.500px;
    font-weight: 500;
}

.legend-item {
    fill: #5f6b6b;
    font-size: 9.500px;
}

.trend {
    fill: none;
    stroke: #118dff;
    stroke-width: 2;
}

/* word cloud */
.wc text {
    font-family: "Open Sans", sans-serif;
}

.wc-da { font-size: 12.500px; }
.wc-ml { font-size: 11.500px; }
.wc-py { font-size: 9.200px; }
.wc-ds { font-size: 10px; }
.wc-dv { font-size: 8.200px; }
.wc-dz { font-size: 8.500px; }
.wc-rp { font-size: 8.200px; }
.wc-sql { font-size: 7.500px; }
.wc-xs { font-size: 5.500px; }
.wc-xxs { font-size: 5px; }

.wc-blue { fill: #118dff; }
.wc-navy { fill: #12239e; }
.wc-deep { fill: #0f5fae; }
.wc-pink { fill: #e645ab; }
.wc-gold { fill: #c4b12a; }
.wc-purple { fill: #8a7cc8; }
.wc-green { fill: #3f9a6a; }
.wc-lime { fill: #a8e04a; }
.wc-aqua { fill: #8ef0d8; }
.wc-dim { fill: #4c8f86; }
.wc-dark { fill: #1f4d4a; }

/* instructor table */
.table-cell {
    display: flex;
    align-items: flex-start;
    gap: 14px;
    padding: 22px 0 0 4px;
}

.rating-table {
    width: 269px;
    table-layout: fixed;
    border-collapse: collapse;
    font-size: 9.200px;
    color: #444;
}

.col-name { width: 117px; }
.col-rate { width: 73px; }
.col-avg { width: 79px; }

.rating-table th {
    position: relative;
    height: 20px;
    padding: 0 3px 5px;
    background-color: #fff;
    border-right: 1px solid #c8f3ea;
    border-bottom: 1px solid #7fbce8;
    text-align: left;
    font-weight: 400;
    white-space: nowrap;
}

.sorted::after {
    content: '';
    position: absolute;
    left: 4px;
    bottom: 1px;
    border: 2.500px solid transparent;
    border-top: 3px solid #444;
    border-bottom: 0;
}

.rating-table td {
    height: 14.400px;
    padding: 0 3px;
    border-right: 1px solid #c8f3ea;
    text-align: right;
    white-space: nowrap;
}

.rating-table td:first-child {
    text-align: left;
}

.rating-table tbody tr {
    background-color: #fff;
}

.rating-table tbody tr:nth-child(even) {
    background-color: #eee;
}

.rating-table tfoot td {
    height: 14px;
    border-top: 1px solid #7fbce8;
    border-right: none;
    color: #1c3838;
    font-weight: 700;
}

.scrollbar {
    width: 5px;
    height: 161px;
    margin-top: 1px;
    border-radius: 3px;
    background-color: rgba(255, 255, 255, 0.45);
}

.scroll-thumb {
    height: 101px;
    border-radius: 3px;
    background-color: #3f9c8e;
}

.sub-next {
    flex-shrink: 0;
}

/* matrix */
.matrix-cell {
    padding: 3px 0 0 3px;
}

.matrix {
    width: 198px;
    table-layout: fixed;
    border-collapse: collapse;
    font-size: 9.500px;
}

.col-cat { width: 75px; }
.col-rank { width: 123px; }

.matrix th {
    height: 20px;
    padding: 0 3px 3px;
    background-color: #252423;
    border: 1px solid #3d6a70;
    color: #fff;
    text-align: left;
    vertical-align: top;
    font-weight: 400;
    white-space: nowrap;
    line-height: 14px;
}

.matrix thead th {
    height: 18px;
    font-size: 9px;
    line-height: 15px;
}

.matrix td {
    height: 20px;
    padding: 0 4px 0 0;
    background-color: #fff;
    border: 1px solid #dde4e4;
    color: #252423;
    text-align: right;
    font-size: 15.500px;
    font-weight: 700;
    line-height: 18px;
}

.matrix tfoot td {
    background-color: #252423;
    border-color: #3d6a70;
    color: #fff;
}

.matrix .lvl0 {
    font-weight: 700;
}

.matrix .lvl1 {
    padding-left: 22px;
}

.matrix .total-name {
    padding-left: 15px;
}

.collapse-box {
    display: inline-block;
    position: relative;
    width: 7px;
    height: 7px;
    margin: 0 5px 0 1px;
    border: 1px solid #9a9a9a;
    vertical-align: -0.5px;
}

.collapse-box::after {
    content: '';
    position: absolute;
    left: 0;
    right: 0;
    top: 2px;
    height: 1px;
    background-color: #9a9a9a;
}

/* right panes */
.pane {
    display: flex;
    flex-direction: column;
    align-items: center;
    padding-top: 20px;
}

.pane-filters {
    flex: 0 0 49px;
    background-color: #fff;
    border-left: 1px solid #a8a8a8;
}

.pane-viz {
    flex: 0 0 52px;
    background-color: #f3f2f1;
    border-left: 1px solid #e1dfdd;
}

.pane-data {
    flex: 0 0 38px;
    padding-left: 5px;
    background-color: #f3f2f1;
    border-left: 1px solid #d5d3d1;
}

.pane-chevron {
    flex-shrink: 0;
}

.pane-data .pane-chevron {
    margin-left: 7px;
}

.pane-funnel {
    margin-top: 24px;
    margin-left: 6px;
    transform: rotate(90deg);
}

.pane-text {
    margin-top: 22px;
    writing-mode: vertical-rl;
    font-size: 23px;
    line-height: 26px;
    color: #323130;
}

.pane-filters .pane-text {
    margin-top: 15px;
    font-size: 22px;
}
```
